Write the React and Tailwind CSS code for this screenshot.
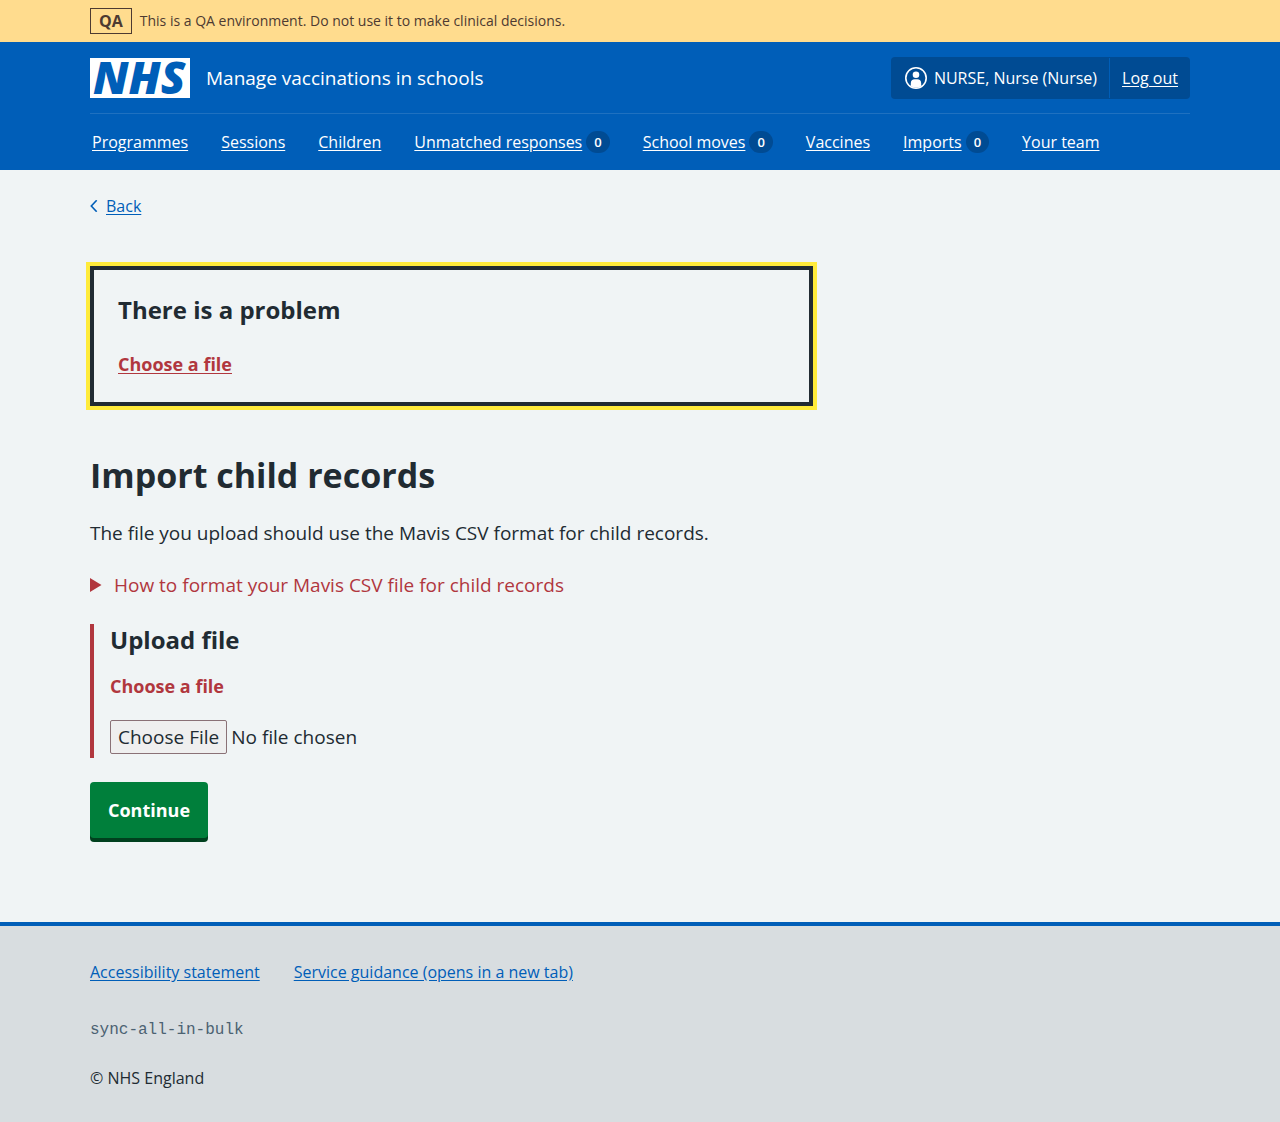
import React from "react";

const navItems = [
  { label: "Programmes" },
  { label: "Sessions" },
  { label: "Children" },
  { label: "Unmatched responses", count: 0 },
  { label: "School moves", count: 0 },
  { label: "Vaccines" },
  { label: "Imports", count: 0 },
  { label: "Your team" },
];

function Container({ className = "", children }) {
  return (
    <div className="px-8">
      <div className={`mx-auto max-w-[1100px] ${className}`}>{children}</div>
    </div>
  );
}

function EnvironmentBanner() {
  return (
    <div className="bg-[#ffdc8e] text-[#4d3a31]">
      <Container className="flex items-center gap-2 py-2">
        <strong className="border border-[#4d3a31] px-2 text-base leading-6 font-bold">QA</strong>
        <span className="text-sm leading-6">This is a QA environment. Do not use it to make clinical decisions.</span>
      </Container>
    </div>
  );
}

function Logo() {
  return (
    <svg className="h-10 w-[100px] overflow-visible" viewBox="0 0 100 40" role="img" aria-label="NHS">
      <rect width="100" height="40" fill="#fff" />
      <text x="3" y="36" fill="#005eb8" fontFamily="'Open Sans', sans-serif" fontSize="45" fontWeight="800" fontStyle="italic">
        NHS
      </text>
    </svg>
  );
}

function UserIcon() {
  return (
    <svg className="size-6" viewBox="0 0 24 24" fill="none" aria-hidden="true">
      <circle cx="12" cy="12" r="10.2" stroke="#fff" strokeWidth="1.6" />
      <circle cx="12" cy="8.8" r="3.3" fill="#fff" />
      <path d="M6.800 20v-2.800c0-2.400 1.600-3.900 3.800-3.900h2.800c2.200 0 3.800 1.500 3.800 3.900V20c-3 2.300-7.400 2.300-10.400 0Z" fill="#fff" />
    </svg>
  );
}

function Header() {
  return (
    <header className="bg-[#005eb8] text-white">
      <Container>
        <div className="flex flex-wrap items-center justify-between gap-4 border-b border-[#1f71c0] pt-[15px] pb-3.5">
          <a href="#" className="flex items-center gap-4">
            <Logo />
            <span className="text-[19px] leading-7">Manage vaccinations in schools</span>
          </a>
          <div className="flex rounded bg-[#004b93] text-base leading-6">
            <span className="flex items-center gap-1.5 py-[9px] pr-3 pl-[13px]">
              <UserIcon />
              NURSE, Nurse (Nurse)
            </span>
            <a href="#" className="my-px border-l border-[#005eb8] px-3 py-2 underline underline-offset-2">
              Log out
            </a>
          </div>
        </div>
        <nav>
          <ul className="flex flex-wrap gap-x-[33px] px-0.5 py-4 text-base leading-6">
            {navItems.map((item) => (
              <li key={item.label} className="flex items-center gap-1">
                <a href="#" className="underline underline-offset-2">
                  {item.label}
                </a>
                {item.count !== undefined && (
                  <span className="rounded-full bg-[#004b93] px-2 text-[13px] leading-[22px] font-semibold">{item.count}</span>
                )}
              </li>
            ))}
          </ul>
        </nav>
      </Container>
    </header>
  );
}

function Main() {
  return (
    <main className="text-[#212b32]">
      <Container>
        <a href="#" className="mt-6 inline-flex items-center gap-2 text-base leading-6 text-[#005eb8]">
          <svg className="h-3 w-2" viewBox="0 0 8 12" fill="none" stroke="currentColor" strokeWidth="1.600" aria-hidden="true">
            <path d="M6.700.3 1.300 6l5.400 5.700" />
          </svg>
          <span className="underline underline-offset-2">Back</span>
        </a>
        <div className="-mx-4">
          <div className="w-full px-4 md:w-2/3">
            <div
              role="alert"
              aria-labelledby="problem-title"
              className="mt-12 border-4 border-[#212b32] p-6 outline-4 outline-[#ffeb3b]"
            >
              <h2 id="problem-title" className="text-2xl leading-8 font-bold">
                There is a problem
              </h2>
              <a href="#upload" className="mt-6 block w-fit text-lg leading-7 font-bold text-[#b1373e] underline underline-offset-2">
                Choose a file
              </a>
            </div>
            <h1 className="mt-[45px] text-[34px] leading-[48px] font-bold">Import child records</h1>
            <p className="mt-5 text-[19px] leading-7">The file you upload should use the Mavis CSV format for child records.</p>
            <details className="group mt-6 text-[19px] leading-7 text-[#b1373e]">
              <summary className="flex cursor-pointer list-none items-center gap-3">
                <svg className="h-3.5 w-3 group-open:rotate-90" viewBox="0 0 12 14" fill="currentColor" aria-hidden="true">
                  <path d="M0 0 11.500 7 0 14Z" />
                </svg>
                How to format your Mavis CSV file for child records
              </summary>
            </details>
            <form className="mt-[25px]" onSubmit={(event) => event.preventDefault()}>
              <div className="border-l-4 border-[#b1373e] pb-1 pl-4">
                <label htmlFor="upload" className="block text-2xl leading-8 font-bold">
                  Upload file
                </label>
                <p id="upload-error" className="mt-4 text-lg leading-7 font-bold text-[#b1373e]">
                  Choose a file
                </p>
                <input
                  id="upload"
                  type="file"
                  aria-describedby="upload-error"
                  className="mt-5 block w-full text-[19px] leading-7 file:mr-1 file:rounded-xs file:border file:border-solid file:border-[#8a7176] file:bg-[#efefef] file:px-[7px] file:py-0.5 file:text-[19px] file:leading-7 file:text-[#212b32]"
                />
              </div>
              <button
                type="submit"
                className="mt-6 mb-1 rounded bg-[#007f3b] px-[18px] py-3.5 text-lg leading-7 font-bold text-white shadow-[0_4px_0_#00401e]"
              >
                Continue
              </button>
            </form>
          </div>
        </div>
      </Container>
    </main>
  );
}

function Footer() {
  return (
    <footer className="mt-20 grow border-t-4 border-[#005eb8] bg-[#d8dde0] text-base leading-6 text-[#212b32]">
      <Container className="pt-[34px] pb-8">
        <ul className="flex flex-wrap gap-x-[34px] text-[#005eb8]">
          <li>
            <a href="#" className="underline underline-offset-2">
              Accessibility statement
            </a>
          </li>
          <li>
            <a href="#" className="underline underline-offset-2">
              Service guidance (opens in a new tab)
            </a>
          </li>
        </ul>
        <p className="mt-[34px] font-['Liberation_Mono',monospace] text-base leading-6 text-[#4c6272]">sync-all-in-bulk</p>
        <p className="mt-6">© NHS England</p>
      </Container>
    </footer>
  );
}

export default function App() {
  return (
    <div className="flex min-h-screen flex-col bg-[#f0f4f5] font-['Open_Sans',sans-serif]">
      <EnvironmentBanner />
      <Header />
      <Main />
      <Footer />
    </div>
  );
}
